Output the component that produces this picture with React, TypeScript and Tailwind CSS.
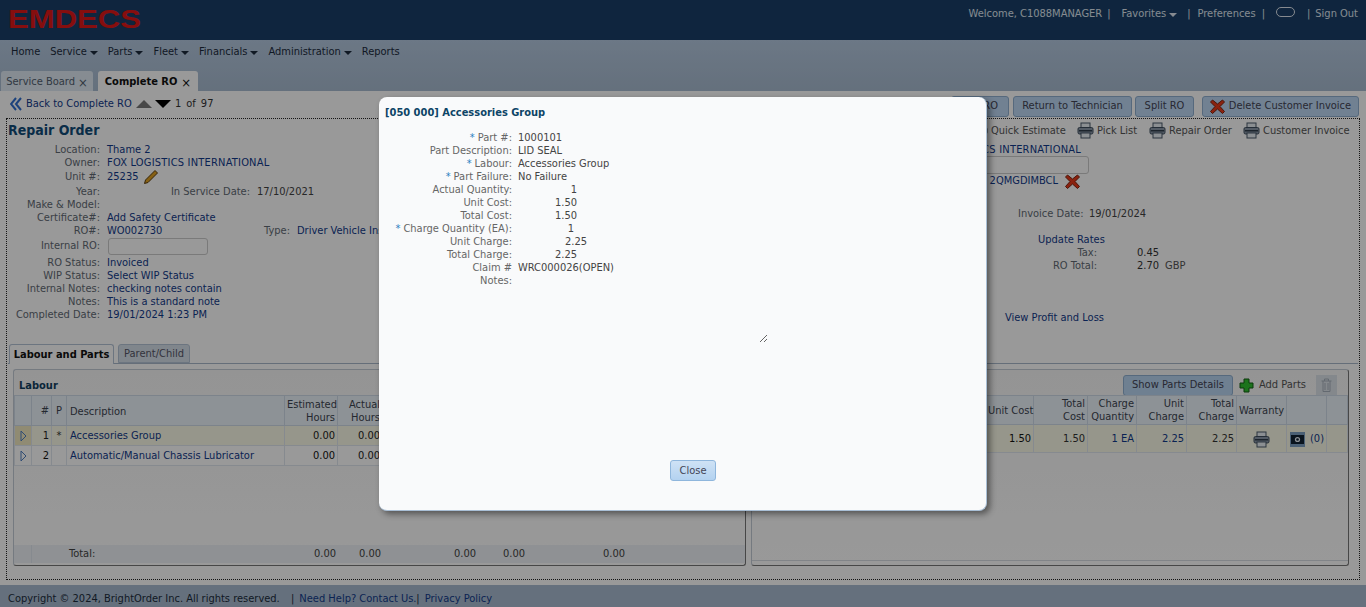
const Printer = () => (
  <svg width="17" height="17" viewBox="0 0 17 17" className="shrink-0">
    <rect x="4" y="1" width="9" height="5" fill="#e8eef4" stroke="#4a5a6a" />
    <rect x="1" y="5.5" width="15" height="6.5" rx="1.5" fill="#8a98a8" stroke="#3f4e5e" />
    <rect x="2" y="8" width="13" height="1.5" fill="#2f3c4a" />
    <rect x="4" y="11" width="9" height="5" fill="#e8eef4" stroke="#4a5a6a" />
  </svg>
)

const RedX = ({ size = 15 }: { size?: number }) => (
  <svg width={size} height={size} viewBox="0 0 15 15" className="shrink-0">
    <path d="M2.5 1 7.5 5 12.5 1 14.5 3 10 7.5 14.5 12.5 12.5 14.5 7.5 10 2.5 14.5.5 12.5 5 7.5.5 3Z" fill="#e8391a" stroke="#7d2410" strokeWidth="1" strokeLinejoin="round" />
  </svg>
)

const Rows = ({ rows }: { rows: [string, string][] }) => (
  <>
    {rows.map(([k, v]) => (
      <div key={k} className="flex h-[13px] leading-[13px]">
        <span className="w-[92px] shrink-0 text-right text-[#626a74]">{k}:</span>
        <span className="ml-[7px] text-[#123a8a]">{v}</span>
      </div>
    ))}
  </>
)

const labourCols = [17, 20, 15, 218, 53, 45, 47, 48, 49, 100, 119]
const LabourCols = () => (
  <colgroup>
    {labourCols.map((w, i) => (
      <col key={i} style={{ width: w }} />
    ))}
  </colgroup>
)

const partsCols = [233, 48, 54, 49, 50, 50, 50, 40, 21]
const th = 'border border-[#cfdbe8] px-[2px] font-normal text-right align-middle leading-[13px] text-[#3c4550]'
const td = 'border border-[#dfe6ee] px-[2px] pt-[1px] text-right'

const modalRows: { label: string; star?: boolean; value?: string; num?: string; w?: string }[] = [
  { label: 'Part #:', star: true, value: '1000101' },
  { label: 'Part Description:', value: 'LID SEAL' },
  { label: 'Labour:', star: true, value: 'Accessories Group' },
  { label: 'Part Failure:', star: true, value: 'No Failure' },
  { label: 'Actual Quantity:', num: '1', w: 'w-[59px]' },
  { label: 'Unit Cost:', num: '1.50', w: 'w-[59px]' },
  { label: 'Total Cost:', num: '1.50', w: 'w-[59px]' },
  { label: 'Charge Quantity (EA):', star: true, num: '1', w: 'w-[56px]' },
  { label: 'Unit Charge:', num: '2.25', w: 'w-[69px]' },
  { label: 'Total Charge:', num: '2.25', w: 'w-[59px]' },
  { label: 'Claim #', value: 'WRC000026(OPEN)' },
]

export default function App() {
  return (
    <div className="relative flex h-[607px] w-[1366px] flex-col overflow-hidden bg-white font-['DejaVu_Sans_Condensed','DejaVu_Sans',sans-serif] text-[11px] text-[#555]">
      {/* header */}
      <div className="flex h-[40px] items-start justify-between bg-[#1a3f68] pl-[8px] pr-[8px] text-[#dfe7f0]">
        <svg width="134" height="28" viewBox="0 0 134 28" className="mt-[8px]">
          <text x="0" y="20" textLength="133" lengthAdjust="spacingAndGlyphs" fontFamily="Liberation Sans" fontWeight="700" fontSize="25" fill="#e01818">EMDECS</text>
        </svg>
        <div className="mt-[7px] flex h-[14px] items-center">
          <span>Welcome, C1088MANAGER</span>
          <span className="ml-[5px]">|</span>
          <span className="ml-[11px]">Favorites</span>
          <span className="ml-[3px] mt-[2px] border-x-[4px] border-t-[4px] border-x-transparent border-t-[#dfe7f0]" />
          <span className="ml-[10px]">|</span>
          <span className="ml-[7px]">Preferences</span>
          <span className="ml-[6px]">|</span>
          <span className="ml-[11px] mb-[4px] h-[10px] w-[19px] rounded-[5px] border border-[#dfe7f0]" />
          <span className="ml-[12px]">|</span>
          <span className="ml-[5px]">Sign Out</span>
        </div>
      </div>

      {/* nav + tabs */}
      <div className="flex h-[51px] flex-col justify-between bg-gradient-to-b from-[#b4c8df] to-[#a8bbd0]">
        <div className="flex h-[22px] items-center pl-[11px] pt-[2px] text-[#1c2b3c]">
          {['Home', 'Service', 'Parts', 'Fleet', 'Financials', 'Administration'].map((n) => (
            <span key={n} className="mr-[10px] flex items-center">
              {n}
              {n !== 'Home' && <span className="ml-[3px] mt-[2px] border-x-[4px] border-t-[4px] border-x-transparent border-t-[#1c2b3c]" />}
            </span>
          ))}
          <span>Reports</span>
        </div>
        <div className="flex h-[20px] gap-[5px] pl-[1px]">
          <div className="flex w-[92px] items-center justify-center rounded-t-[3px] bg-[#dfeaf3] pt-[2px] text-[#526070]">
            Service Board <span className="ml-[3px] text-[13px] leading-none">×</span>
          </div>
          <div className="flex w-[100px] items-center justify-center rounded-t-[3px] bg-white pt-[2px] font-bold text-[#111]">
            Complete RO <span className="ml-[4px] text-[13px] font-normal leading-none">×</span>
          </div>
        </div>
      </div>

      {/* toolbar */}
      <div className="flex h-[27px] shrink-0 items-start justify-between pl-[10px] pr-[7px]">
        <div className="mt-[6px] flex h-[14px] items-center">
          <svg width="12" height="14" viewBox="0 0 12 14">
            <path d="M6 1 1 7l5 6M11 1 6 7l5 6" fill="none" stroke="#2f6fd0" strokeWidth="2" />
          </svg>
          <span className="ml-[4px] w-[103px] whitespace-nowrap text-[#123a8a]">Back to Complete RO</span>
          <span className="ml-[7px] border-x-[8px] border-b-[8px] border-x-transparent border-b-[#777]" />
          <span className="ml-[3px] border-x-[8px] border-t-[8px] border-x-transparent border-t-black" />
          <span className="ml-[4px] flex gap-[5px] text-[#333]">
            <span>1</span>
            <span>of</span>
            <span>97</span>
          </span>
        </div>
        <div className="mt-[5px] flex items-center text-[#445]">
          <button className="mr-[4px] h-[21px] w-[58px] rounded-[3px] border border-[#8fb0d0] bg-[#bcd8f4] text-right pr-[10px]">RO</button>
          <button className="mr-[3px] h-[21px] w-[119px] rounded-[3px] border border-[#8fb0d0] bg-[#bcd8f4]">Return to Technician</button>
          <button className="mr-[8px] h-[21px] w-[59px] rounded-[3px] border border-[#8fb0d0] bg-[#bcd8f4]">Split RO</button>
          <button className="flex h-[21px] w-[157px] items-center justify-center gap-[4px] rounded-[3px] border border-[#8fb0d0] bg-[#bcd8f4]">
            <RedX /> Delete Customer Invoice
          </button>
        </div>
      </div>

      {/* main dotted box */}
      <div className="mx-[6px] flex h-[462px] shrink-0 flex-col border border-dotted border-[#222] px-[1px]">
        <div className="flex h-[225px] shrink-0">
          <div className="w-[372px] shrink-0 pt-[3px]">
            <h1 className="h-[21px] text-[14px] font-bold leading-[17px] text-[#0f4b78]">Repair Order</h1>
            <Rows rows={[['Location', 'Thame 2']]} />
            <div className="flex h-[13px] leading-[13px]">
              <span className="w-[92px] shrink-0 text-right text-[#626a74]">Owner:</span>
              <span className="ml-[7px] tracking-[0.2px] text-[#123a8a]">FOX LOGISTICS INTERNATIONAL</span>
            </div>
            <div className="flex h-[16px] items-center">
              <span className="w-[92px] shrink-0 text-right text-[#626a74]">Unit #:</span>
              <span className="ml-[7px] text-[#123a8a]">25235</span>
              <svg width="16" height="16" viewBox="0 0 16 16" className="ml-[5px]">
                <path d="M12 1.5 14.5 4 5 13.5 1.5 14.5 2.5 11Z" fill="#e0a020" stroke="#5a3d10" />
              </svg>
            </div>
            <div className="flex h-[13px] whitespace-nowrap leading-[13px]">
              <span className="w-[92px] shrink-0 text-right text-[#626a74]">Year:</span>
              <span className="w-[150px] shrink-0 text-right text-[#626a74]">In Service Date:</span>
              <span className="ml-[7px] text-[#444]">17/10/2021</span>
            </div>
            <Rows rows={[['Make & Model', ''], ['Certificate#', 'Add Safety Certificate']]} />
            <div className="flex h-[13px] whitespace-nowrap leading-[13px]">
              <span className="w-[92px] shrink-0 text-right text-[#626a74]">RO#:</span>
              <span className="ml-[7px] w-[60px] shrink-0 text-[#123a8a]">WO002730</span>
              <span className="w-[123px] shrink-0 text-right text-[#626a74]">Type:</span>
              <span className="ml-[7px] text-[#123a8a]">Driver Vehicle Ins</span>
            </div>
            <div className="flex h-[19px] items-center">
              <span className="w-[92px] shrink-0 text-right text-[#626a74]">Internal RO:</span>
              <div className="ml-[8px] h-[17px] w-[100px] rounded-[3px] border border-[#ccc] bg-white" />
            </div>
            <Rows
              rows={[
                ['RO Status', 'Invoiced'],
                ['WIP Status', 'Select WIP Status'],
                ['Internal Notes', 'checking notes contain'],
                ['Notes', 'This is a standard note'],
                ['Completed Date', '19/01/2024 1:23 PM'],
              ]}
            />
          </div>
          <div className="ml-auto w-[400px] whitespace-nowrap">
            <div className="flex h-[20px] items-end pl-[13px] text-[#555]">
              <Printer />
              <span className="ml-[3px] w-[72px]">Quick Estimate</span>
              <span className="ml-[14px]"><Printer /></span>
              <span className="ml-[3px] w-[39px]">Pick List</span>
              <span className="ml-[13px]"><Printer /></span>
              <span className="ml-[3px] w-[62px]">Repair Order</span>
              <span className="ml-[12px]"><Printer /></span>
              <span className="ml-[3px]">Customer Invoice</span>
            </div>
            <div className="mt-[4px] flex h-[13px] w-[123px] justify-end leading-[13px] tracking-[0.2px] text-[#123a8a]">
              <span className="shrink-0">FOX LOGISTICS INTERNATIONAL</span>
            </div>
            <div className="h-[18px] w-[131px] rounded-[3px] border border-[#ccc] bg-white" />
            <div className="flex h-[15px] items-center text-[#123a8a]">
              <span className="w-[100px] text-right">2QMGDIMBCL</span>
              <span className="ml-[7px]"><RedX /></span>
            </div>
            <div className="mt-[18px] flex h-[13px] leading-[13px]">
              <span className="ml-[60px] w-[64px] text-[#626a74]">Invoice Date:</span>
              <span className="ml-[7px] text-[#444]">19/01/2024</span>
            </div>
            <div className="mt-[13px] h-[13px] pl-[80px] leading-[13px] text-[#123a8a]">Update Rates</div>
            <div className="flex h-[13px] leading-[13px]">
              <span className="w-[139px] text-right text-[#626a74]">Tax:</span>
              <span className="ml-[40px] text-[#333]">0.45</span>
            </div>
            <div className="flex h-[13px] leading-[13px]">
              <span className="w-[139px] text-right text-[#626a74]">RO Total:</span>
              <span className="ml-[40px] text-[#333]">2.70</span>
              <span className="ml-[6px] text-[#555]">GBP</span>
            </div>
            <div className="mt-[39px] h-[13px] pl-[47px] leading-[13px] text-[#123a8a]">View Profit and Loss</div>
          </div>
        </div>

        {/* tabs */}
        <div className="flex h-[20px] shrink-0 gap-[4px] border-b border-[#a9b8ca] pl-[1px] pr-[8px]">
          <div className="flex h-[20px] w-[105px] items-center justify-center rounded-t-[3px] border border-b-0 border-[#b5c4d6] bg-white pt-[2px] font-bold text-[#111]">Labour and Parts</div>
          <div className="flex h-[19px] w-[72px] items-center justify-center rounded-t-[3px] border border-[#b5c4d6] bg-[#d6e0ea] pt-[2px] text-[#556]">Parent/Child</div>
        </div>

        {/* panels */}
        <div className="mt-[5px] flex h-[197px] shrink-0 gap-[5px] pl-[5px] pr-[9px]">
          <div className="flex w-[733px] shrink-0 flex-col rounded-[3px] border border-[#c4ccd6] border-b-[#777] border-r-[#777] bg-gradient-to-b from-[#f7f7f7] to-white">
            <div className="h-[25px] shrink-0 pl-[5px] pt-[9px] font-bold leading-[13px] text-[#123f60]">Labour</div>
            <table className="w-[731px] shrink-0 table-fixed border-collapse">
              <LabourCols />
              <thead className="bg-[#ecf3fb]">
                <tr className="h-[30px]">
                  <th className={th} />
                  <th className={th}>#</th>
                  <th className={th + ' !text-center'}>P</th>
                  <th className={th + ' pl-[3px] pt-[1px] !text-left'}>Description</th>
                  <th className={th}>Estimated Hours</th>
                  <th className={th}>Actual Hours</th>
                  <th className={th} colSpan={5} />
                </tr>
              </thead>
              <tbody className="text-[#123a8a]">
                <tr className="h-[20px] bg-[#fbfbe8]">
                  <td className={td + ' bg-[#f0e8c0] !text-center'}>
                    <svg width="7" height="12" viewBox="0 0 7 12" className="mx-auto"><path d="M1 1l5 5-5 5Z" fill="none" stroke="#4f7fc0" /></svg>
                  </td>
                  <td className={td + ' text-[#222]'}>1</td>
                  <td className={td + ' !text-center text-[#333]'}>*</td>
                  <td className={td + ' pl-[3px] !text-left'}>Accessories Group</td>
                  <td className={td + ' text-[#222]'}>0.00</td>
                  <td className={td + ' text-[#222]'}>0.00</td>
                  <td className={td} colSpan={5} />
                </tr>
                <tr className="h-[20px] bg-white">
                  <td className={td + ' !text-center'}>
                    <svg width="7" height="12" viewBox="0 0 7 12" className="mx-auto"><path d="M1 1l5 5-5 5Z" fill="none" stroke="#4f7fc0" /></svg>
                  </td>
                  <td className={td + ' text-[#111]'}>2</td>
                  <td className={td} />
                  <td className={td + ' pl-[3px] !text-left'}>Automatic/Manual Chassis Lubricator</td>
                  <td className={td + ' text-[#111]'}>0.00</td>
                  <td className={td + ' text-[#222]'}>0.00</td>
                  <td className={td} colSpan={5} />
                </tr>
              </tbody>
            </table>
            <div className="flex-1" />
            <table className="mb-[2px] w-[731px] shrink-0 table-fixed border-collapse">
              <LabourCols />
              <tbody>
                <tr className="h-[18px] bg-[#eef2f7] text-[#444]">
                  <td className="border-r border-[#dfe6ee]" />
                  <td />
                  <td />
                  <td className="px-[3px]">Total:</td>
                  {['0.00', '0.00', '', '0.00', '0.00', '0.00', ''].map((v, i) => (
                    <td key={i} className="px-[1px] text-right">{v}</td>
                  ))}
                </tr>
              </tbody>
            </table>
          </div>

          <div className="flex flex-1 flex-col rounded-[3px] border border-[#c4ccd6] border-b-[#777] border-r-[#777] bg-gradient-to-b from-[#f7f7f7] to-white">
            <div className="flex h-[25px] shrink-0 items-center justify-end pr-[11px] pt-[5px]">
              <button className="h-[21px] w-[110px] rounded-[3px] border border-[#8fb0d0] bg-[#b9d6f2] text-[#445]">Show Parts Details</button>
              <svg width="15" height="15" viewBox="0 0 15 15" className="ml-[6px]">
                <path d="M5 1h5v4h4v5h-4v4H5v-4H1V5h4Z" fill="#2fc02f" stroke="#156015" />
              </svg>
              <span className="ml-[5px] w-[46px] whitespace-nowrap text-[#555]">Add Parts</span>
              <div className="ml-[11px] flex h-[21px] w-[21px] items-center justify-center bg-[#dce3ea]">
                <svg width="11" height="14" viewBox="0 0 11 14" fill="none" stroke="#a6b0bb">
                  <path d="M.5 3h10M3.5 3V1h4v2M2 3v10.5h7V3M4 5v7M7 5v7" />
                </svg>
              </div>
            </div>
            <table className="w-[595px] table-fixed border-collapse">
              <colgroup>
                {partsCols.map((w, i) => (
                  <col key={i} style={{ width: w }} />
                ))}
              </colgroup>
              <thead className="bg-[#ecf3fb]">
                <tr className="h-[29px]">
                  <th className={th} />
                  <th className={th + ' whitespace-nowrap'}>Unit Cost</th>
                  <th className={th}>Total<br />Cost</th>
                  <th className={th}>Charge Quantity</th>
                  <th className={th}>Unit Charge</th>
                  <th className={th}>Total Charge</th>
                  <th className={th}>Warranty</th>
                  <th className={th} />
                  <th className={th} />
                </tr>
              </thead>
              <tbody>
                <tr className="h-[28px] bg-[#fbfbe8] text-[#333]">
                  <td className={td} />
                  <td className={td + ' text-[#111]'}>1.50</td>
                  <td className={td}>1.50</td>
                  <td className={td + ' text-[#123a8a]'}>1 EA</td>
                  <td className={td + ' text-[#123a8a]'}>2.25</td>
                  <td className={td}>2.25</td>
                  <td className={td}><div className="flex justify-center"><Printer /></div></td>
                  <td className={td}>
                    <div className="flex items-center justify-end gap-[5px] text-[#123a8a]">
                      <svg width="15" height="15" viewBox="0 0 15 15">
                        <rect width="15" height="15" fill="#7ea0c4" />
                        <rect x="1" y="3" width="13" height="9" fill="#123" />
                        <circle cx="7.5" cy="7.5" r="2.6" fill="#e8f0f8" />
                        <circle cx="7.5" cy="7.5" r="1.3" fill="#123" />
                      </svg>
                      (0)
                    </div>
                  </td>
                  <td className={td} />
                </tr>
              </tbody>
            </table>
            <div className="flex-1" />
            <div className="h-[5px] border-t border-[#d8dde3]" />
          </div>
        </div>
      </div>

      {/* footer */}
      <div className="mt-[5px] flex h-[22px] flex-1 items-center bg-[#a8bbd0] pl-[8px] pt-[7px] text-[#1c2b3c]">
        <span className="w-[266px] whitespace-nowrap">Copyright © 2024, BrightOrder Inc. All rights reserved.</span>
        <span className="ml-[17px]">|</span>
        <span className="ml-[5px] w-[114px] whitespace-nowrap text-[#123a8a]">Need Help? Contact Us.</span>
        <span className="ml-[3px]">|</span>
        <span className="ml-[5px] text-[#123a8a]">Privacy Policy</span>
      </div>

      {/* dim overlay */}
      <div className="absolute inset-0 bg-black/40" />

      {/* modal */}
      <div className="absolute left-[379px] top-[97px] flex h-[414px] w-[608px] flex-col rounded-[8px] border-b border-r border-[#a9bfd6] bg-[#f9fafb] px-[6px] shadow-[3px_3px_6px_rgba(0,0,0,0.45)]">
        <h2 className="mt-[9px] h-[14px] text-[11px] font-bold leading-[14px] text-[#0d4466]">[050 000] Accessories Group</h2>
        <div className="mt-[11px] text-[#666]">
          {modalRows.map((r) => (
            <div key={r.label} className="flex h-[13px] leading-[13px]">
              <span className="w-[127px] whitespace-nowrap text-right">
                {r.star && <span className="mr-[3px] text-[#2f7fc0]">*</span>}
                {r.label}
              </span>
              {r.value && <span className="ml-[6px] text-[#444]">{r.value}</span>}
              {r.num && <span className={'ml-[6px] text-right text-[#444] ' + r.w}>{r.num}</span>}
            </div>
          ))}
          <div className="flex h-[13px] leading-[13px]">
            <span className="w-[127px] text-right">Notes:</span>
            <textarea className="ml-[6px] h-[69px] w-[250px] resize bg-transparent outline-none" />
          </div>
        </div>
        <div className="mt-auto mb-[29px] flex pl-[285px]">
          <button className="h-[21px] w-[46px] rounded-[3px] border border-[#8fb6dc] bg-gradient-to-b from-[#cfe2f5] to-[#b3d2f0] pt-[1px] text-[#445]">Close</button>
        </div>
      </div>
    </div>
  )
}
